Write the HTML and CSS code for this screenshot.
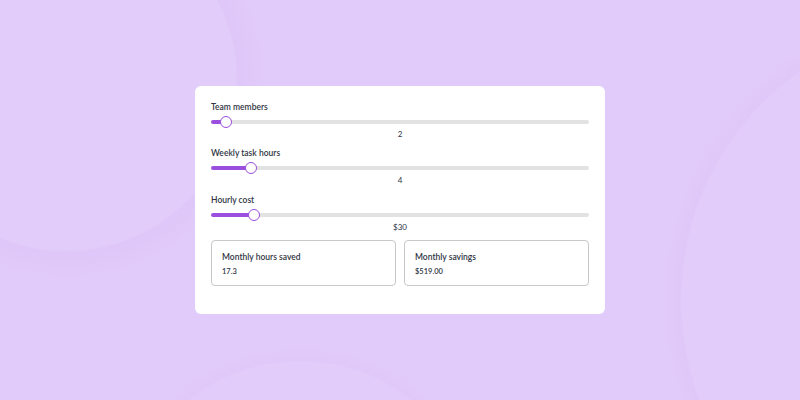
FILE: index.html
```html
<!DOCTYPE html>
<html lang="en">
<head>
  <meta charset="UTF-8">
  <title>Automation savings calculator</title>
  <meta name="viewport" content="width=device-width, initial-scale=1">
  <link rel="stylesheet" href="styles.css">
</head>
<body>
  <div class="calc">
    <div class="field">
      <label for="team">Team members</label>
      <input id="team" type="range" min="1" max="40" value="2" style="--fill: 4.1%">
      <div class="value">2</div>
    </div>
    <div class="field">
      <label for="hours">Weekly task hours</label>
      <input id="hours" type="range" min="1" max="33" value="4" style="--fill: 10.7%">
      <div class="value">4</div>
    </div>
    <div class="field">
      <label for="cost">Hourly cost</label>
      <input id="cost" type="range" min="10" max="210" value="30" style="--fill: 11.3%">
      <div class="value">$30</div>
    </div>
    <div class="summary">
      <div class="stat">
        <div class="stat-title">Monthly hours saved</div>
        <div class="stat-value">17.3</div>
      </div>
      <div class="stat">
        <div class="stat-title">Monthly savings</div>
        <div class="stat-value">$519.00</div>
      </div>
    </div>
  </div>
</body>
</html>
```

FILE: styles.css
```css
html, body {
  height: 100%;
}
body {
  margin: 0;
  color: #2f3443;
  font-family: Lato, "Liberation Sans", sans-serif;
  display: flex;
  align-items: center;
  justify-content: center;
  /* faint rings behind the card */
  background:
    radial-gradient(circle at 66px 80px, rgba(255, 255, 255, 0.03) 0 170px, rgba(170, 120, 220, 0.045) 172px, rgba(170, 120, 220, 0) 200px),
    radial-gradient(circle at 960px 300px, rgba(255, 255, 255, 0.025) 0 278px, rgba(170, 120, 220, 0.03) 280px, rgba(170, 120, 220, 0) 298px),
    radial-gradient(circle at 300px 540px, rgba(255, 255, 255, 0.02) 0 178px, rgba(170, 120, 220, 0.022) 180px, rgba(170, 120, 220, 0) 194px),
    #e1cbfa;
}
.calc {
  width: 410px;
  box-sizing: border-box;
  background: #fff;
  border-radius: 6px;
  padding: 15px 16px 28px;
}
.field label {
  display: block;
  font-size: 8.5px;
  font-weight: 600;
  line-height: 12px;
}
.field input {
  -webkit-appearance: none;
  appearance: none;
  display: block;
  width: 100%;
  height: 12px;
  margin: 3px 0 1px;
  background: transparent;
}
.field input::-webkit-slider-runnable-track {
  height: 4px;
  border-radius: 2px;
  background: linear-gradient(to right, #9b4fde var(--fill), #e2e2e2 var(--fill));
}
.field input::-webkit-slider-thumb {
  -webkit-appearance: none;
  width: 12px;
  height: 12px;
  margin-top: -4px;
  box-sizing: border-box;
  border-radius: 50%;
  background: #fff;
  border: 1.5px solid #9b4fde;
}
.value {
  text-align: center;
  font-size: 8px;
  line-height: 10px;
  margin-bottom: 8.5px;
}
.summary {
  display: grid;
  grid-template-columns: 1fr 1fr;
  gap: 8px;
}
.stat {
  border: 1px solid #c8c8cc;
  border-radius: 4px;
  height: 46px;
  box-sizing: border-box;
  padding: 10px 10px 0;
}
.stat-title {
  font-size: 8.5px;
  font-weight: 600;
  line-height: 12px;
}
.stat-value {
  font-size: 7.5px;
  font-weight: 600;
  line-height: 10px;
  margin-top: 4px;
}
```
